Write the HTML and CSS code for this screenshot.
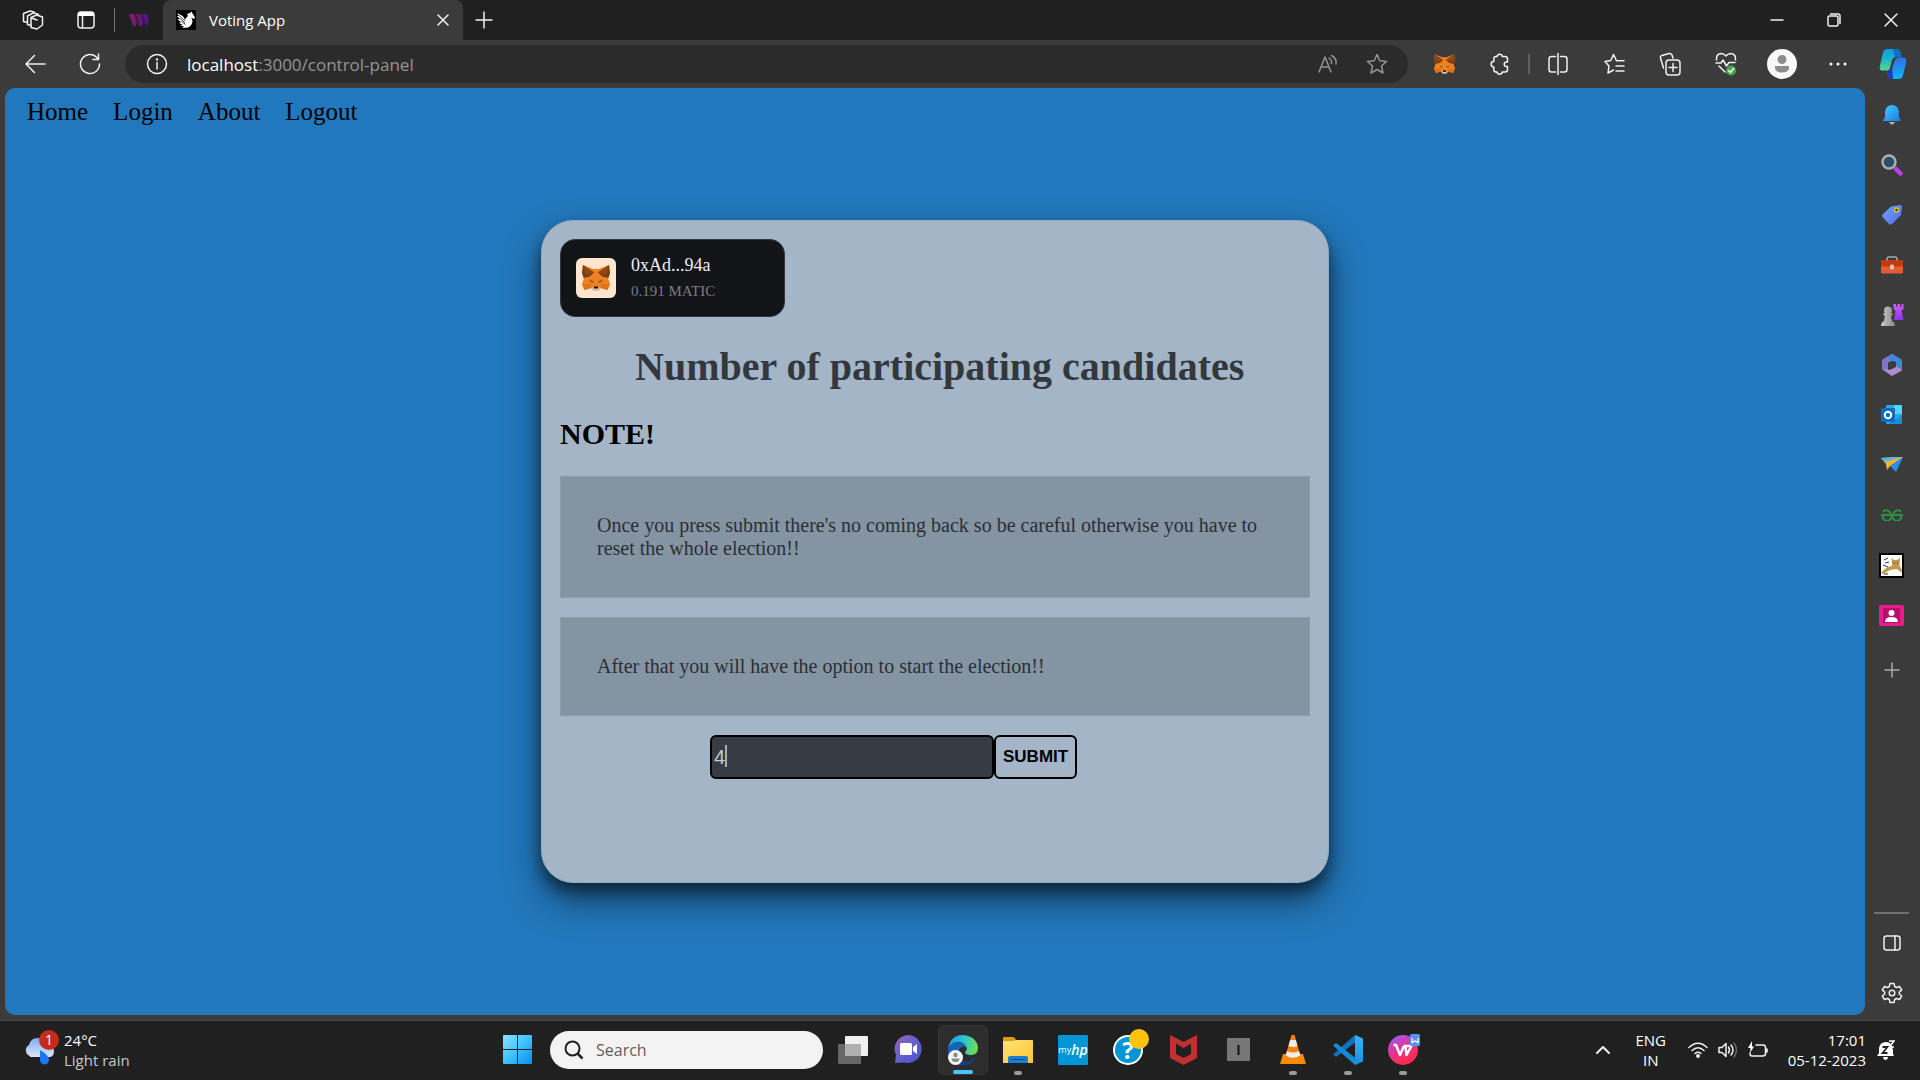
FILE: index.html
```html
<!DOCTYPE html>
<html lang="en">
<head>
<meta charset="utf-8">
<meta name="viewport" content="width=device-width, initial-scale=1">
<title>Voting App</title>
<link rel="stylesheet" href="styles.css">
</head>
<body>
<svg class="defs" aria-hidden="true">
  <defs>
    <linearGradient id="g-third" x1="0" x2="1"><stop offset="0" stop-color="#8a1a68"/><stop offset="1" stop-color="#4a148c"/></linearGradient>
    <linearGradient id="g-bell" x1="0" y1="0" x2="1" y2="1"><stop offset="0" stop-color="#3fd0ff"/><stop offset="1" stop-color="#1b78e0"/></linearGradient>
    <linearGradient id="g-cop1" x1="0" y1="0" x2="0" y2="1"><stop offset="0" stop-color="#0a9be8"/><stop offset=".5" stop-color="#1fb5c4"/><stop offset="1" stop-color="#5fd88a"/></linearGradient>
    <linearGradient id="g-cop2" x1="0" y1="0" x2="0" y2="1"><stop offset="0" stop-color="#2e6fe0"/><stop offset="1" stop-color="#12b4fa"/></linearGradient>
    <linearGradient id="g-tag" x1="0" y1="0" x2="1" y2="1"><stop offset="0" stop-color="#6ea6ff"/><stop offset="1" stop-color="#5468ee"/></linearGradient>
    <linearGradient id="g-rook" x1="0" y1="0" x2="0" y2="1"><stop offset="0" stop-color="#d15cff"/><stop offset="1" stop-color="#8a35e8"/></linearGradient>
    <linearGradient id="g-pawn" x1="0" x2="1"><stop offset="0" stop-color="#c9c9c9"/><stop offset="1" stop-color="#888"/></linearGradient>
    <linearGradient id="g-win" x1="0" y1="0" x2="1" y2="1"><stop offset="0" stop-color="#8be4ff"/><stop offset=".5" stop-color="#3cc3ff"/><stop offset="1" stop-color="#0a8df0"/></linearGradient>
    <linearGradient id="g-chat" x1="0" y1="0" x2="1" y2="1"><stop offset="0" stop-color="#9a63b8"/><stop offset=".6" stop-color="#5a5fd0"/><stop offset="1" stop-color="#4a52c4"/></linearGradient>
    <linearGradient id="g-edge" x1="0" y1=".3" x2="1" y2=".5"><stop offset="0" stop-color="#1a9fe8"/><stop offset=".5" stop-color="#2ac3d2"/><stop offset="1" stop-color="#6de04a"/></linearGradient>
    <linearGradient id="g-fold" x1="0" y1="0" x2="1" y2="1"><stop offset="0" stop-color="#ffe27a"/><stop offset="1" stop-color="#ffc72e"/></linearGradient>
    <linearGradient id="g-wps" x1="0" y1="0" x2=".5" y2="1"><stop offset="0" stop-color="#8a63ff"/><stop offset=".5" stop-color="#e0359c"/><stop offset="1" stop-color="#ff2a4a"/></linearGradient>
    <linearGradient id="g-cloud" x1="0" y1="0" x2="0" y2="1"><stop offset="0" stop-color="#7fa9f2"/><stop offset="1" stop-color="#dbe6fa"/></linearGradient>
    <linearGradient id="g-code" x1="0" y1="0" x2="0" y2="1"><stop offset="0" stop-color="#3ab4f5"/><stop offset="1" stop-color="#1a8fdd"/></linearGradient>
    <symbol id="fox" viewBox="0 0 28 26">
      <path d="M1 0 11 4H17L27 0 28 8 26 13 28 19 25.500 25 19 23 16.500 25.500H11.500L9 23 2.500 25 0 19 2 13 0 8Z" fill="#f0821e"/>
      <path d="M1 0 12 7.500 8 11.500 1.500 13 0 8ZM27 0 16 7.500 20 11.500 26.500 13 28 8Z" fill="#7d3f14"/>
      <path d="M1 0 12 7.500 4 9ZM27 0 16 7.500 24 9Z" fill="#8d4a1b"/>
      <path d="M0 19H9V23L2.500 25ZM28 19H19V23L25.500 25Z" fill="#e2701a"/>
      <path d="M8 14.500 12 16.500 10.500 18 7.500 16.500ZM20 14.500 16 16.500 17.500 18 20.500 16.500Z" fill="#7b6450"/>
      <path d="M10 23 14 21.500 18 23 17 25.500H11Z" fill="#d5bfb2"/>
      <path d="M12 21.500H16V23.500H12Z" fill="#16120f"/>
    </symbol>
  </defs>
</svg>

<header class="tabstrip">
  <button class="tab-tool" aria-label="Workspaces">
    <svg width="22" height="20" viewBox="0 0 22 20" class="line"><path d="M9 7.500 14.500 5 20.500 7V15L15 19 9 17.500ZM9.500 8 15 10"/><path d="M9 15.500 5.500 14.500V6L11.500 2.800 16.500 4.500M5.500 12.500 1.500 11.500V3.500L8 1 12 2"/></svg>
  </button>
  <button class="tab-tool" aria-label="Tab actions">
    <svg width="18" height="18" viewBox="0 0 18 18"><rect x="1" y="1" width="16" height="16" rx="3" class="line"/><path d="M1 5V3Q1 1 3 1H15Q17 1 17 3V5Z" fill="#fff"/><path d="M5.500 5V17" class="line"/></svg>
  </button>
  <span class="tab-divider"></span>
  <button class="tab-pinned" aria-label="thirdweb">
    <svg width="20" height="12" viewBox="0 0 20 12"><path d="M0 0H5.500L8 7.500 6.500 12H4ZM7 0H12L14.500 7.500 13 12H10.500ZM13.500 0H18L20 6 18.500 12H17Z" fill="url(#g-third)"/></svg>
  </button>
  <div class="tab">
    <svg width="20" height="20" viewBox="0 0 20 20"><rect width="20" height="20"/><path d="M1 3C5 5 8 6 9 10L10 8 12 6 11 4 14 3 15.500 1.500 16.500 3.500 19 7.500 18 9 15 7.500C18 11 16 16 12 17.500L6 18 8 16.500 4.500 15.500 6.500 14.500 3 13 5 12 1.500 9.500 4 9 1 6 3 6Z" fill="#fff"/><path d="M3 5.500 9 11M4 8.500 9 13M5.500 11.500 9.500 14.500" stroke="#000" stroke-width=".7"/></svg>
    <span class="tab-title">Voting App</span>
    <button class="tab-close" aria-label="Close tab"><svg width="12" height="12" viewBox="0 0 12 12" class="line"><path d="M1 1 11 11M11 1 1 11"/></svg></button>
  </div>
  <button class="tab-new" aria-label="New tab"><svg width="18" height="18" viewBox="0 0 18 18" class="line"><path d="M9 1V17M1 9H17"/></svg></button>
  <div class="window-controls">
    <button aria-label="Minimise"><svg width="14" height="14" viewBox="0 0 14 14" class="line"><path d="M1 7H13"/></svg></button>
    <button aria-label="Restore"><svg width="14" height="14" viewBox="0 0 14 14" class="line"><rect x="1" y="3" width="10" height="10" rx="1.500"/><path d="M3.500 1H11Q13 1 13 3V10.500"/></svg></button>
    <button aria-label="Close"><svg width="14" height="14" viewBox="0 0 14 14" class="line"><path d="M1 1 13 13M13 1 1 13"/></svg></button>
  </div>
</header>

<div class="toolbar">
  <button class="nav-button" aria-label="Back"><svg width="22" height="20" viewBox="0 0 22 20" class="line"><path d="M21 10H2M10.500 1.500 2 10 10.500 18.500"/></svg></button>
  <button class="nav-button" aria-label="Refresh"><svg width="22" height="22" viewBox="0 0 22 22" class="line"><path d="M20.500 11A9.500 9.500 0 1 1 17 3.700L19.500 6.500M19.500 1V6.500H14"/></svg></button>
  <div class="address">
    <svg width="22" height="22" viewBox="0 0 22 22" class="line"><circle cx="11" cy="11" r="9.500"/><path d="M11 9.500V16"/><circle cx="11" cy="6.500" r=".5"/></svg>
    <span class="url"><b>localhost</b>:3000/control-panel</span>
    <button class="address-button" aria-label="Read aloud"><svg width="20" height="20" viewBox="0 0 20 20" class="line"><path d="M1 18 7 3 13 18M3 13H11M11 4Q14 6 13.500 9.500M13.500 1.500Q19 4.500 18 10"/></svg></button>
    <button class="address-button" aria-label="Add to favourites"><svg width="22" height="22" viewBox="0 0 22 22" class="line"><path d="M11 1.500 13.800 7.700 20.500 8.500 15.500 13 17 20 11 16.500 5 20 6.500 13 1.500 8.500 8.200 7.700Z"/></svg></button>
  </div>
  <button class="tool" aria-label="MetaMask"><svg width="21" height="20"><use href="#fox"/></svg></button>
  <button class="tool" aria-label="Extensions"><svg width="20" height="22" viewBox="0 0 20 22" class="line"><path d="M7 3.500A2.700 2.700 0 0 1 12.300 3.500H15Q17.500 3.500 17.500 6V9H16.500A2.300 2.300 0 0 0 16.500 13.600H17.500V16.500Q17.500 19 15 19H12.300A2.700 2.700 0 0 1 7 19H6Q3.800 19 3.800 16.500V14A2.700 2.700 0 0 1 3.800 8.600V6Q3.800 3.500 6 3.500Z"/></svg></button>
  <span class="tool-divider"></span>
  <button class="tool" aria-label="Split screen"><svg width="20" height="22" viewBox="0 0 20 22" class="line"><path d="M10 0V22M7.500 3.500H3.500Q1 3.500 1 6V16.500Q1 19 3.500 19H7.500M12.500 3.500H16.500Q19 3.500 19 6V16.500Q19 19 16.500 19H12.500"/></svg></button>
  <button class="tool" aria-label="Favourites"><svg width="21" height="22" viewBox="0 0 21 22" class="line"><path d="M14 7.800H12.500L9.500 1.500 6.800 7.500 1 8.500 5 13 4 20 9.500 17M13.500 7.800H20M12 13H20M12 18H20"/></svg></button>
  <button class="tool" aria-label="Collections"><svg width="22" height="24" viewBox="0 0 22 24" class="line"><path d="M4.500 16 1.500 6Q1 4 3 3.500L10 1.500Q12 1 13 3L14 6"/><rect x="7" y="8" width="14" height="15" rx="3"/><path d="M14 11.500V19.500M10 15.500H18"/></svg></button>
  <button class="tool" aria-label="Browser essentials"><svg width="22" height="24" viewBox="0 0 22 24"><path class="line" d="M1.500 8Q1 2 6 1.500 9 1.500 11 4 13 1.500 16 1.500 21 2 20.500 8M1 11H6L8 8 11.500 14 14 10.500H20M4 14 10 20"/><circle cx="16" cy="18.500" r="5" fill="#47a84b"/><path d="M13.500 18.500 15.500 20.500 18.500 16.500" class="line"/></svg></button>
  <button class="tool" aria-label="Profile"><svg width="30" height="30" viewBox="0 0 30 30"><circle cx="15" cy="15" r="15" fill="#f8f8f8"/><circle cx="15" cy="10.500" r="4.500" fill="#8d8d8d"/><path d="M8 17H22V18.500Q22 23.500 15 23.500T8 18.500Z" fill="#8d8d8d"/></svg></button>
  <button class="tool" aria-label="Settings and more"><svg width="18" height="4" viewBox="0 0 18 4" fill="#fff"><circle cx="2" cy="2" r="1.500"/><circle cx="9" cy="2" r="1.500"/><circle cx="16" cy="2" r="1.500"/></svg></button>
  <button class="tool tool-last" aria-label="Copilot"><svg width="30" height="30" viewBox="0 0 30 32"><path d="M9 0H18Q22 0 23 4L24 8H19Q16 8 15 11L12 20Q11 23 8 23H4Q0 23 1 18L4 5Q5 0 9 0Z" fill="url(#g-cop1)"/><path d="M15 0H18Q22 0 23 4L24 9H20Q17 9 16 5Z" fill="#0c6fc4"/><path d="M22 9H26Q30 9 29 14L26 27Q25 32 21 32H14Q10 32 9.500 27L9 24Q13 23 14 20L17 12Q18 9 22 9Z" fill="url(#g-cop2)"/><path d="M9 24Q13 23 14 19L15 32H13Q10 31 9.500 27Z" fill="#2038c8"/><path d="M14 11H17L13.500 22H11.500Z" fill="#3b3b3b"/></svg></button>
</div>

<div class="workspace">
  <main class="page">
    <nav class="site-nav">
      <a href="#home">Home</a><a href="#login">Login</a><a href="#about">About</a><a href="#logout">Logout</a>
    </nav>
    <div class="stage">
      <section class="card">
        <button class="wallet">
          <span class="wallet-logo"><svg width="28" height="26"><use href="#fox"/></svg></span>
          <span class="wallet-text"><span class="wallet-address">0xAd...94a</span><span class="wallet-balance">0.191 MATIC</span></span>
        </button>
        <h1>Number of participating candidates</h1>
        <h2>NOTE!</h2>
        <p class="note">Once you press submit there's no coming back so be careful otherwise you have to reset the whole election!!</p>
        <p class="note">After that you will have the option to start the election!!</p>
        <form class="entry">
          <span class="field"><input type="text" value="4" aria-label="Number of candidates"><span class="caret"></span></span>
          <button type="button" class="submit">SUBMIT</button>
        </form>
      </section>
    </div>
  </main>

  <aside class="sidebar">
    <button aria-label="Notifications"><svg width="20" height="22" viewBox="0 0 20 22"><path d="M3 8A7 7 0 0 1 17 8V13L19 17H1L3 13Z" fill="url(#g-bell)"/><path d="M6.500 18H13.500L10 21Z" fill="#b5b0aa"/></svg></button>
    <button aria-label="Search"><svg width="22" height="22" viewBox="0 0 22 22"><path d="M15 15 19.500 19.500" stroke="#c13cf0" stroke-width="4.500" stroke-linecap="round"/><circle cx="8" cy="8" r="6.500" fill="#28506a" stroke="#b0adab" stroke-width="2.500"/></svg></button>
    <button aria-label="Shopping"><svg width="22" height="22" viewBox="0 0 22 22"><path d="M10 2.500 19 1Q21 1 21 3L20 11 11 20Q9.500 21.500 8 20L1.500 13Q.5 11.500 2 10Z" fill="url(#g-tag)"/><circle cx="15.500" cy="6" r="2" fill="#333" stroke="#e8bd2a" stroke-width="1.500"/></svg></button>
    <button aria-label="Tools"><svg width="24" height="18" viewBox="0 0 24 18"><path d="M7 5V3Q7 1 9 1H15Q17 1 17 3V5" fill="none" stroke="#aaa" stroke-width="1.500"/><rect x="1" y="4.500" width="22" height="13" rx="1.500" fill="#e35b31"/><rect x="1" y="4.500" width="22" height="6" rx="1" fill="#c9380c"/><rect x="10" y="8.500" width="4" height="5" rx="1.500" fill="#cfc8c4"/></svg></button>
    <button aria-label="Games"><svg width="24" height="24" viewBox="0 0 24 24"><path d="M13.500 1H16V3.500H17.500V1H20V3.500H21.500V1H23.500V6L21.500 8 23.500 17H14L15.500 8 13.500 6Z" fill="url(#g-rook)"/><path d="M4 7.500A4 4 0 1 1 12 7.500Q12 9 11 10H12.500V12.500H11L12 18Q15 19 15 23H1Q1 19 4 18L5 12.500H3.500V10H5Q4 9 4 7.500Z" fill="url(#g-pawn)"/></svg></button>
    <button aria-label="Microsoft 365"><svg width="22" height="22" viewBox="0 0 22 22"><path d="M11 0 2 5Q1 6 1 7V15L7 18V9L14 5V1Z" fill="#7f74cc"/><path d="M10 0Q11 0 12 .5L20 5Q21 6 21 7V15L15 12V8L7 6Z" fill="#3f86dc"/><path d="M1 15 10 21.500Q11 22 12 21.500L20 17Q21 16 21 15L15 12 9 16Z" fill="#b28ad0"/><path d="M11 7 15 9V13L11 15 7 13V9Z" fill="#3b3b3b"/></svg></button>
    <button aria-label="Outlook"><svg width="22" height="20" viewBox="0 0 22 20"><rect x="5" width="16" height="19" rx="1" fill="#28a8ea"/><path d="M13 0H20Q21 0 21 1V9H13Z" fill="#50d9ff"/><path d="M8 19 21 10V18Q21 19 20 19Z" fill="#1490df"/><rect y="3" width="14" height="14" rx="1" fill="#0f6cbd"/><circle cx="7" cy="10" r="3.200" fill="none" stroke="#fff" stroke-width="2"/></svg></button>
    <button aria-label="Drop"><svg width="22" height="16" viewBox="0 0 22 16"><path d="M0 1 22 0 8 8Z" fill="#4fb8f5"/><path d="M22 0 15 15 9 9Z" fill="#2a8df0"/><path d="M0 1 22 0 5 7ZM5 7 22 0 9 9 6 13Z" fill="#f7b52c"/><path d="M0 1 22 0 4 5Z" fill="#55b9f4"/></svg></button>
    <button aria-label="GeeksforGeeks"><svg width="22" height="12" viewBox="0 0 22 12" fill="none" stroke="#2f8d46" stroke-width="2"><path d="M0 6H22M10 6A4.300 4.300 0 1 1 2 6M12 6A4.300 4.300 0 1 0 20 6M2 2.500Q6-.5 9.500 4V6M20 2.500Q16-.5 12.500 4V6"/></svg></button>
    <button aria-label="Tomcat"><svg width="25" height="25" viewBox="0 0 25 25"><rect x="1" y="1" width="23" height="23" fill="#fff" stroke="#000" stroke-width="2"/><path d="M2 20Q8 13 13 13L12.500 5 15 7H18L21 5 20.500 13Q23 15 23 20L18 16 11 17 4 21Z" fill="#c39a4c"/><path d="M5 7 9 5M6 10 10 9M4 12 9 14M15 10H16M18 10H19M5 21H9" stroke="#333"/></svg></button>
    <button aria-label="Contacts"><svg width="25" height="21" viewBox="0 0 25 21"><rect width="25" height="21" rx="2" fill="#e61e8c"/><rect x="4" y="3" width="17" height="15" fill="#b80f6c"/><circle cx="12.500" cy="8" r="3" fill="#fff"/><path d="M6 17Q6 12 12.500 12T19 17Z" fill="#fff"/></svg></button>
    <button class="add" aria-label="Customise"><svg width="16" height="16" viewBox="0 0 16 16" class="line dim"><path d="M8 1V15M1 8H15"/></svg></button>
    <span class="sidebar-divider"></span>
    <button aria-label="Hide sidebar"><svg width="18" height="16" viewBox="0 0 18 16" class="line"><rect x="1" y="1" width="16" height="14" rx="2.500"/><path d="M12 1V15"/></svg></button>
    <button aria-label="Sidebar settings"><svg width="22" height="22" viewBox="0 0 22 22" class="line"><path d="M9 1.500H13L13.700 4.500 15.500 5.500 18.500 4.500 20.700 8.200 18.300 10V12L20.700 14 18.500 17.500 15.500 16.500 13.700 17.500 13 20.500H9L8.300 17.500 6.500 16.500 3.500 17.500 1.300 14 3.700 12V10L1.300 8.200 3.500 4.500 6.500 5.500 8.300 4.500Z"/><circle cx="11" cy="11" r="2.800"/></svg></button>
  </aside>
</div>

<footer class="taskbar">
  <div class="weather">
    <span class="weather-icon">
      <svg width="31" height="30" viewBox="0 0 31 30"><path d="M6 21A6 6 0 0 1 5 10Q7 2 15 3 22 3 24 10 30 11 30 16 30 22 25 22H6Z" fill="url(#g-cloud)"/><path d="M16 15Q25 20 25 25A4.500 4.500 0 0 1 16 25Z" fill="#1a78f5"/></svg>
      <span class="badge">1</span>
    </span>
    <span class="stack"><span>24°C</span><span class="muted">Light rain</span></span>
  </div>
  <div class="apps">
    <button class="app" aria-label="Start"><svg width="29" height="29" viewBox="0 0 29 29"><path d="M1 0H14V14H0V1Q0 0 1 0ZM15 0H28Q29 0 29 1V14H15ZM0 15H14V29H1Q0 29 0 28ZM15 15H29V28Q29 29 28 29H15Z" fill="url(#g-win)"/></svg></button>
    <label class="search"><svg width="20" height="20" viewBox="0 0 20 20" fill="none" stroke="#222" stroke-width="2"><circle cx="8.500" cy="8.500" r="7"/><path d="M13.500 13.500 18.500 18.500" stroke-width="2.500"/></svg><input type="search" placeholder="Search" aria-label="Search"></label>
    <button class="app" aria-label="Task view"><svg width="30" height="28" viewBox="0 0 30 28"><rect y="8" width="23" height="20" rx="1" fill="#666"/><rect x="7" width="23" height="20" rx="1" fill="#f0f0f0"/><path d="M7 8H23V20H7Z" fill="#b0b0b0"/></svg></button>
    <button class="app" aria-label="Chat"><svg width="29" height="29" viewBox="0 0 29 29"><path d="M14.500 0A14 14 0 1 1 10 27.500L1 28 2 20A14 14 0 0 1 14.500 0Z" fill="url(#g-chat)"/><rect x="6" y="8" width="12" height="12" rx="1.500" fill="#fff"/><path d="M19 12 23 9V19L19 16Z" fill="#fff"/></svg></button>
    <button class="app active" aria-label="Microsoft Edge"><svg width="30" height="30" viewBox="0 0 30 30"><path d="M0 15Q2 7 10 7 18 8 19 13 14 9 11 15 9 22 15 26 21 29 28 22 23 30 15 30 0 30 0 15Z" fill="#1565b8"/><path d="M11 15Q8 22 15 26 21 28 28 22 24 30 15 30 8 28 8 20 8 17 11 15Z" fill="#123f86"/><path d="M0 13Q3 0 15 0 28 1 30 12 30 20 23 20 17 20 17 17 20 14 18 11 14 6 8 7 3 8 0 13Z" fill="url(#g-edge)"/><circle cx="7.500" cy="22.500" r="7.500" fill="#f5f5f5"/><circle cx="7.500" cy="20" r="2.200" fill="#888"/><path d="M3.500 23.500H11.500Q11.500 27 7.500 27T3.500 23.500Z" fill="#888"/></svg></button>
    <button class="app running" aria-label="File Explorer"><svg width="30" height="28" viewBox="0 0 30 28"><path d="M0 2Q0 1 1 1H10Q12 1 13 4H29V14H0Z" fill="#dd9a0a"/><path d="M0 6Q0 5 1 5H10L13 4H29Q30 4 30 5V27H0Z" fill="url(#g-fold)"/><path d="M5 27V22Q5 20 7 20H23Q25 20 25 22V27Z" fill="#1a7fd0"/><path d="M8 23.500H22" stroke="#0a4f92"/></svg></button>
    <button class="app" aria-label="myHP"><span class="hp"><small>my</small><em>hp</em></span></button>
    <button class="app" aria-label="HP Support Assistant"><span class="help">?<i></i></span></button>
    <button class="app" aria-label="McAfee"><svg width="27" height="30" viewBox="0 0 27 30"><path d="M0 0 13.500 7 27 0V23L13.500 30 0 23ZM6 8.500V19L13.500 23 21 19V8.500L13.500 13Z" fill="#c22f2f"/></svg></button>
    <button class="app" aria-label="I"><svg width="23" height="23" viewBox="0 0 23 23"><rect width="23" height="23" rx="1" fill="#777"/><path d="M11.500 7V17" stroke="#111" stroke-width="2"/></svg></button>
    <button class="app running" aria-label="VLC"><svg width="26" height="29" viewBox="0 0 26 29"><path d="M3 19H23L26 29H0Z" fill="#f78a0a"/><path d="M11.500 0H14.500L20.500 21Q13 26 5.500 21Z" fill="#f5820c"/><path d="M10.200 5H15.800L17.500 11Q13 13 8.500 11ZM7 16Q13 19 19 16L20.300 20.500Q13 25 5.700 20.500Z" fill="#eee"/></svg></button>
    <button class="app running" aria-label="Visual Studio Code"><svg width="30" height="30" viewBox="0 0 30 30"><path d="M0 19.500 3 22 22 7.500V0Z" fill="#0f74c0"/><path d="M0 10.500 3 8 22 22.500V30Z" fill="#1689d6"/><path d="M22 0 30 3.500V26.500L22 30Z" fill="url(#g-code)"/></svg></button>
    <button class="app running" aria-label="WPS Office"><svg width="30" height="30" viewBox="0 0 30 30" overflow="visible"><circle cx="15" cy="15" r="15" fill="url(#g-wps)"/><path d="M5.500 10H8L12 20 15.500 12H17.500L18.500 20 23.500 11H15.500" fill="none" stroke="#fff" stroke-width="2.500" stroke-linejoin="round"/><rect x="22" y="-1" width="10" height="12" rx="1.500" fill="#5b8ff5"/><path d="M24 3V7.500L27 6 30 7.500V3" fill="none" stroke="#fff" stroke-width="1.200"/></svg></button>
  </div>
  <div class="tray">
    <button class="chevron" aria-label="Show hidden icons"><svg width="14" height="9" viewBox="0 0 14 9" class="line bold"><path d="M1 8 7 2 13 8"/></svg></button>
    <span class="stack centre language"><span>ENG</span><span>IN</span></span>
    <span class="status">
      <svg width="20" height="16" viewBox="0 0 20 16" class="line"><path d="M1 5.500Q10-3 19 5.500M4 8.500Q10 3 16 8.500M7 11.500Q10 9 13 11.500"/><circle cx="10" cy="14" r="1.200" fill="#fff"/></svg>
      <svg width="20" height="16" viewBox="0 0 20 16" class="line"><path d="M1 5.500H4L8 1.500V14.500L4 10.500H1ZM10.500 5Q12.500 8 10.500 11M13 3Q17 8 13 13"/><path d="M16 1Q21 8 16 15" stroke="#666"/></svg>
      <svg width="20" height="17" viewBox="0 0 20 17" class="line"><path d="M8 4H15Q17.500 4 17.500 6.500V12.500Q17.500 15 15 15H4Q2 15 2 12.500V12M19 8V11"/><path d="M4 0 0 7H2.500L2 12 6 5.500H4Z" fill="#fff" stroke="none"/></svg>
    </span>
    <span class="stack end"><span>17:01</span><span>05-12-2023</span></span>
    <button class="bell" aria-label="Notifications"><svg width="18" height="20" viewBox="0 0 18 20"><path d="M2 13V8Q3 2 9 2 12 2 14 4L16 10V14L17 16H0ZM6 17H11Q10.500 20 8.500 20T6 17Z" fill="#fff"/><path d="M5.500 7H10.500L5.500 13H10.500" fill="none" stroke="#222" stroke-width="1.800"/><path d="M12 1H17L12.500 7H17" fill="none" stroke="#fff" stroke-width="1.500"/></svg></button>
  </div>
</footer>
</body>
</html>
```
FILE: styles.css
```css
* { box-sizing: border-box; }

body {
  margin: 0;
  min-height: 100vh;
  display: flex;
  flex-direction: column;
  background: #3b3b3b;
  color: #fff;
  font-family: "Open Sans", "Noto Sans", sans-serif;
  font-size: 15px;
}

button {
  display: flex;
  align-items: center;
  justify-content: center;
  flex: none;
  padding: 0;
  border: 0;
  background: none;
  color: inherit;
  font: inherit;
}

svg { display: block; flex: none; }
.defs { position: absolute; width: 0; height: 0; }
.line { fill: none; stroke: #f0f0f0; stroke-width: 1.5; stroke-linecap: round; stroke-linejoin: round; }
.line.dim { stroke: #aaa; }
.line.bold { stroke-width: 2; }

/* Tab strip */
.tabstrip {
  display: flex;
  align-items: stretch;
  height: 40px;
  padding-left: 6px;
  background: #202020;
}
.tab-tool { width: 53px; }
.tab-divider { width: 1px; margin: 8px 0 8px 2px; background: #707070; }
.tab-pinned { width: 48px; }
.tab {
  display: flex;
  align-items: center;
  gap: 13px;
  width: 300px;
  padding: 0 8px 0 13px;
  border-radius: 8px 8px 0 0;
  background: #3b3b3b;
}
.tab-title { flex: 1; }
.tab-close { width: 24px; height: 24px; }
.tab-new { width: 42px; }
.window-controls { display: flex; margin-left: auto; padding-right: 1px; }
.window-controls button { width: 57px; }

/* Toolbar */
.toolbar {
  display: flex;
  align-items: center;
  height: 48px;
  padding-left: 7px;
}
.nav-button { width: 55px; height: 38px; }
.address {
  display: flex;
  align-items: center;
  flex: 1;
  height: 38px;
  margin: 0 8px;
  padding: 0 7px 0 21px;
  border-radius: 19px;
  background: #2b2b2b;
}
.url { flex: 1; margin-left: 19px; color: #949494; font-size: 17px; }
.url b { color: #fff; font-weight: 400; }
.address-button { width: 49px; height: 38px; }
.address-button .line { stroke: #949494; }
.tool { width: 56px; height: 38px; }
.tool-last { width: 54px; }
.tool-divider { width: 2px; height: 20px; background: #606060; }

/* Page and sidebar */
.workspace { display: flex; flex: 1; }
.page {
  display: flex;
  flex-direction: column;
  flex: 1;
  margin: 0 0 5px 5px;
  border-radius: 10px;
  background: #2278bc;
  color: #000;
  font-family: "Liberation Serif", "Times New Roman", serif;
  overflow: hidden;
}
.site-nav {
  display: flex;
  gap: 25px;
  height: 48px;
  padding: 10px 22px;
  font-size: 25px;
  line-height: 28px;
}
.site-nav a { color: #000; text-decoration: none; }
.stage {
  display: flex;
  align-items: center;
  justify-content: center;
  flex: 1;
  padding: 0 16px 48px;
}
.card {
  width: 100%;
  max-width: 788px;
  padding: 18px 18px 103px;
  border: 1px solid #91aac0;
  border-radius: 32px;
  background: #a3b5c7;
  box-shadow: 0 18px 34px rgba(0, 0, 0, .5), 0 8px 14px rgba(0, 0, 0, .4);
}
.wallet {
  justify-content: flex-start;
  gap: 15px;
  width: 225px;
  height: 78px;
  padding: 0 15px;
  border: 1px solid #343540;
  border-radius: 15px;
  background: #131418;
  text-align: left;
}
.wallet-logo {
  display: flex;
  align-items: center;
  justify-content: center;
  width: 40px;
  height: 40px;
  border-radius: 6px;
  background: #ffe6ce;
}
.wallet-text { display: flex; flex-direction: column; gap: 8px; }
.wallet-address { color: #eeeef0; font-size: 18px; line-height: 18px; }
.wallet-balance { color: #7c7a85; font-size: 15px; line-height: 18px; }
h1 {
  margin: 27px 0 27px 75px;
  color: #33383f;
  font-size: 40px;
  line-height: 46px;
}
h2 { margin: 0 0 25px; font-size: 30px; line-height: 34px; }
.note {
  margin: 0 0 19px;
  padding: 37px 36px;
  border: 1px solid #8e9dab;
  background: #8494a3;
  color: #2b2f34;
  font-size: 20px;
  line-height: 23px;
}
.entry { display: flex; align-items: center; padding-left: 20%; }
.field { position: relative; }
.field input {
  display: block;
  width: 284px;
  height: 44px;
  padding: 0 2px;
  border: 2px solid #000;
  border-radius: 6px;
  background: #363c42;
  color: #c4c8cc;
  font-family: "Liberation Sans", Arial, sans-serif;
  font-size: 20px;
}
.caret { position: absolute; left: 15px; top: 10px; width: 2px; height: 22px; background: #a9adb1; }
.submit {
  height: 44px;
  padding: 0 7px;
  border: 2px solid #000;
  border-radius: 6px;
  font-family: "Liberation Sans", Arial, sans-serif;
  font-size: 17px;
  font-weight: 700;
}

.sidebar {
  display: flex;
  flex-direction: column;
  align-items: center;
  width: 55px;
  padding: 2px 2px 2px 0;
}
.sidebar button { width: 50px; height: 50px; }
.sidebar .add { margin-top: 5px; }
.sidebar-divider { width: 35px; height: 2px; margin: auto 0 4px; background: #707070; }

/* Taskbar */
.taskbar {
  display: grid;
  grid-template-columns: 1fr auto 1fr;
  align-items: center;
  height: 60px;
  padding-bottom: 2px;
  background: #202020;
  border-top: 1px solid #454545;
}
.stack { display: flex; flex-direction: column; line-height: 20px; }
.stack.centre { align-items: center; }
.stack.end { align-items: flex-end; }
.muted { color: #c8c8c8; }
.weather { display: flex; align-items: center; gap: 9px; padding-left: 24px; }
.weather-icon { position: relative; }
.badge {
  position: absolute;
  top: -5px;
  left: 15px;
  width: 20px;
  height: 20px;
  border-radius: 50%;
  background: #c42b1c;
  font-size: 14px;
  line-height: 20px;
  text-align: center;
}
.apps { display: flex; align-items: center; gap: 5px; }
.app { position: relative; width: 50px; height: 50px; border-radius: 6px; }
.app.active { background: #2d2d2d; border: 1px solid #363636; }
.app.active::after,
.app.running::after {
  content: "";
  position: absolute;
  bottom: 0;
  width: 8px;
  height: 4px;
  border-radius: 2px;
  background: #9a9a9a;
}
.app.active::after { width: 20px; background: #4cc2ff; }
.search {
  display: flex;
  align-items: center;
  gap: 12px;
  width: 273px;
  height: 38px;
  margin: 0 0 0 3px;
  padding: 0 14px;
  border-radius: 19px;
  background: #f3f3f3;
}
.search input {
  flex: 1;
  min-width: 0;
  padding: 0;
  border: 0;
  background: none;
  font: inherit;
  font-size: 16px;
}
.search input::placeholder { color: #5f5f5f; }
.hp {
  display: flex;
  align-items: center;
  justify-content: center;
  width: 30px;
  height: 30px;
  border-radius: 1px;
  background: #0096d6;
}
.hp small { font-size: 9px; }
.hp em { font-size: 14px; font-weight: 600; }
.help {
  position: relative;
  width: 30px;
  height: 30px;
  border: 2px solid #fff;
  border-radius: 50%;
  background: #0096d6;
  font-size: 24px;
  font-weight: 700;
  line-height: 26px;
}
.help i { position: absolute; top: -8px; right: -8px; width: 20px; height: 20px; border-radius: 50%; background: #ffc20e; }
.tray { display: flex; align-items: center; justify-content: flex-end; padding-right: 25px; }
.chevron { width: 30px; height: 40px; }
.language { width: 66px; }
.status { display: flex; align-items: center; gap: 10px; margin: 0 20px 0 4px; }
.bell { width: 18px; height: 40px; margin-left: 11px; }
```
